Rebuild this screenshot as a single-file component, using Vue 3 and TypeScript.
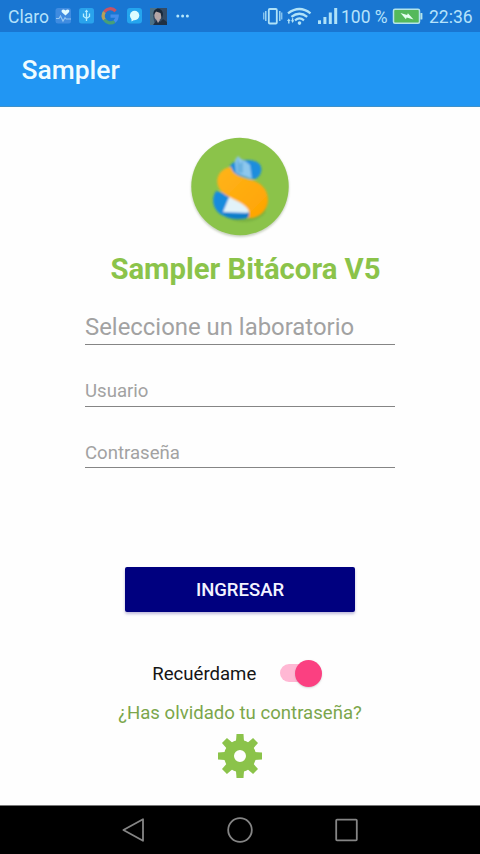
<script setup lang="ts">
import { ref } from 'vue'

const laboratory = ref('')
const user = ref('')
const password = ref('')
const remember = ref(true)
const toothAngles: number[] = [0, 45, 90, 135, 180, 225, 270, 315]
</script>

<template>
  <div class="screen">
    <header class="status-bar">
      <span class="carrier">Claro</span>
      <svg class="notifications" width="136" height="32" viewBox="54 0 136 32">
        <rect x="55.5" y="8" width="15.5" height="15.5" rx="2.5" fill="#3f8be0" />
        <path d="M65.5 15.5l-3.6-3.3c-1.4-2.2 1.6-4 3.6-1.6 2.2-2.4 5-.4 3.4 1.6z" fill="#e0fbff" />
        <path d="M56 18.5h3l1.5-2.5 2.5 5 2-3.4 1.2 1.4H71" fill="none" stroke="#94c6f0" stroke-width="1.1" />
        <rect x="79" y="8" width="15" height="15.5" rx="2.5" fill="#29a3ec" />
        <path d="M86.5 21V10.5M83.5 13.5v3l3 2 3-2v-3" fill="none" stroke="#b5edff" stroke-width="1.3" />
        <path d="M84.8 12l1.7-2.5 1.7 2.5z" fill="#b5edff" />
        <g fill="none" stroke-width="3.2">
          <path d="M115.6 11.1A7 7 0 0 0 104.4 12" stroke="#c65465" />
          <path d="M104.4 12A7 7 0 0 0 104.4 19.7" stroke="#b5a05a" />
          <path d="M104.4 19.7A7 7 0 0 0 114.6 21.4" stroke="#479f78" />
          <path d="M114.6 21.4A7 7 0 0 0 117.2 16.2H110.5" stroke="#448eea" />
        </g>
        <rect x="127" y="8" width="15" height="15.5" rx="3" fill="#24a5ee" />
        <circle cx="134.6" cy="15.5" r="4.7" fill="#dbfbff" />
        <path d="M131.5 18v3.4l3.5-2z" fill="#dbfbff" />
        <rect x="150" y="8" width="17" height="17" fill="#334b65" />
        <path d="M150 8h7l-4 8 2 9h-5z" fill="#4b7187" />
        <ellipse cx="158" cy="15.5" rx="3.6" ry="5" fill="#b4a6a6" />
        <path d="M153.5 15c-1-8 9-8 9.5-1l-1 5-1.5-6-4.5-1.5z" fill="#17283a" />
        <path d="M153 25l4-5 3 2 3-3 4 3v3z" fill="#1f3044" />
        <path d="M156.5 20l1.5 3 2-3z" fill="#aaa1a7" />
        <g fill="#b4e6fb">
          <circle cx="177.8" cy="16" r="1.5" />
          <circle cx="182.6" cy="16" r="1.5" />
          <circle cx="187.4" cy="16" r="1.5" />
        </g>
      </svg>
      <svg class="signals" width="78" height="32" viewBox="262 0 78 32">
        <g fill="none" stroke="#afe2f8">
          <rect x="268.8" y="9" width="8" height="14.5" rx="1" stroke-width="1.8" />
          <path d="M265.8 11v10M279.8 11v10" stroke-width="1.3" />
          <path d="M263.8 12.5v7M281.8 12.5v7" stroke-width="1" />
          <path d="M288 13.3Q299.5 4.6 310.5 13.3" stroke-width="2.3" />
          <path d="M291.4 16.9Q299.5 10.6 307.2 16.9" stroke-width="2.3" />
          <path d="M295 20.3Q299.5 16.6 304 20.3" stroke-width="2.2" />
        </g>
        <g fill="#afe2f8">
          <circle cx="299.5" cy="23.1" r="1.8" />
          <path d="M287 21l1.8-2.5 1.8 2.5zM291 20.3h3.2l-1.6 2.7z" />
          <rect x="288.1" y="20.5" width="1.4" height="3" />
          <rect x="291.9" y="18.2" width="1.4" height="3" />
          <rect x="318" y="20.3" width="3" height="3.7" />
          <rect x="323.4" y="17" width="3" height="7" />
          <rect x="328.8" y="12.5" width="3" height="11.5" />
          <rect x="334.2" y="8" width="3" height="16" />
        </g>
      </svg>
      <span class="percent">100 %</span>
      <svg class="battery" width="32" height="32" viewBox="391 0 32 32">
        <rect x="393.5" y="9.3" width="26" height="14" rx="1.5" fill="#54b95b" stroke="#b4e4ea" stroke-width="1.5" />
        <rect x="420.4" y="13" width="2" height="6.5" rx=".6" fill="#b4e4ea" />
        <path d="M400.5 13l6.6 2 .8-1.8 5.6 6.3-6.8-2-.8 1.8z" fill="#e4fff0" />
      </svg>
      <span class="clock">22:36</span>
    </header>

    <div class="app-bar"><h1 class="app-title">Sampler</h1></div>

    <main class="content">
      <svg class="logo" width="104" height="104" viewBox="0 0 104 104">
        <defs>
          <linearGradient id="ribbon" x1="0" y1="0" x2="1" y2="1">
            <stop offset="0" stop-color="#ffb41c" />
            <stop offset="1" stop-color="#ffa300" />
          </linearGradient>
          <filter id="soften" x="-20%" y="-20%" width="140%" height="140%"><feGaussianBlur stdDeviation=".8" /></filter>
          <filter id="shade" x="-20%" y="-20%" width="140%" height="140%"><feGaussianBlur stdDeviation="1.3" /></filter>
        </defs>
        <circle cx="52" cy="53" r="49" fill="#adb9a0" opacity=".65" filter="url(#shade)" />
        <circle cx="52" cy="51.5" r="48.7" fill="#8bc34a" />
        <path d="M34 75c10 10 25 12 36 3l8-15-1 15c-9 11-30 12-40 2z" fill="#679c38" opacity=".45" filter="url(#shade)" />
        <g filter="url(#soften)">
          <path d="M40 36c2-9 10-12 17-11 12-1 18 5 16 12-2 7-8 9-14 6l-17-5z" fill="#1c8ddd" />
          <path d="M47 25l3-4 3 3 4 2 5 4 2 14-16-6z" fill="#8ec8ed" />
          <path d="M49 22l3 7 3-3v12h-6z" fill="#2789c9" opacity=".35" />
          <path d="M28 56c-6 9-2 21 8 25 10 5 24 4 28-2L42 60z" fill="#168bdd" />
          <path d="M42 60l22 14-2 4-27-1z" fill="#e2f2f8" />
          <path d="M35 77c7 3 18 3 27 0l1 4c-8 5-20 3-26-1z" fill="#097dc8" />
          <path d="M43 32c-10 1-16 10-13 19 3 8 11 11 19 15 8 4 15 9 11 17 11 1 20-8 20-18 0-11-8-18-17-20-9-2-18-5-20-13z" fill="url(#ribbon)" />
        </g>
      </svg>
      <h2 class="heading">Sampler Bitácora V5</h2>
      <form class="form" @submit.prevent>
        <input v-model="laboratory" class="field field-large" type="text" placeholder="Seleccione un laboratorio" />
        <input v-model="user" class="field" type="text" placeholder="Usuario" />
        <input v-model="password" class="field" type="password" placeholder="Contraseña" />
        <button class="submit" type="submit"><span>INGRESAR</span></button>
      </form>
      <div class="remember">
        <span class="remember-label">Recuérdame</span>
        <button class="switch" :class="{ on: remember }" type="button" role="switch" :aria-checked="remember" @click="remember = !remember">
          <span class="thumb"></span>
        </button>
      </div>
      <a class="forgot">¿Has olvidado tu contraseña?</a>
      <svg class="gear" width="46" height="46" viewBox="-23 -23 46 46">
        <g fill="#8bc34a">
          <path v-for="angle in toothAngles" :key="angle" d="M-4.2-12L-3.5-22H3.5L4.2-12z" :transform="`rotate(${angle})`" />
        </g>
        <circle r="11" fill="none" stroke="#8bc34a" stroke-width="10" />
      </svg>
    </main>

    <nav class="nav-bar">
      <svg width="24" height="26" viewBox="0 0 24 26"><path d="M2.4 13L22 2.2v21.6z" /></svg>
      <svg width="26" height="26" viewBox="0 0 26 26"><circle cx="13" cy="13" r="11.8" /></svg>
      <svg width="24" height="26" viewBox="0 0 24 26"><rect x="1.2" y="2.7" width="20.6" height="20.6" rx=".8" /></svg>
    </nav>
  </div>
</template>

<style>
body {
  background: #fff;
}
</style>

<style scoped>
.screen {
  display: flex;
  flex-direction: column;
  width: 480px;
  height: 854px;
  overflow: hidden;
  background: #fefefe;
  font-family: Roboto, "Liberation Sans", sans-serif;
}
.status-bar {
  display: flex;
  align-items: center;
  flex: none;
  height: 32px;
  padding: 0 8px;
  background: #1976d2;
  color: #b5e2fb;
  font-size: 17.5px;
  line-height: 32px;
  white-space: nowrap;
}
.status-bar svg {
  flex: none;
}
.carrier {
  width: 46px;
}
.carrier,
.percent,
.clock {
  padding-top: 1px;
}
.signals {
  margin-left: auto;
}
.percent {
  width: 49px;
  padding-left: 1px;
  box-sizing: border-box;
}
.battery {
  margin: 0 6px 0 2px;
}
.clock {
  width: 43px;
}
.app-bar {
  display: flex;
  align-items: center;
  flex: none;
  box-sizing: border-box;
  height: 75px;
  padding: 2px 21.5px 0;
  border-bottom: 1px solid #3f91c9;
  background: #2196f3;
}
.app-title {
  margin: 0;
  color: #effcff;
  font-size: 26.4px;
  font-weight: 500;
  line-height: 32px;
}
.content {
  display: flex;
  flex-direction: column;
  align-items: center;
  flex: 1;
  min-height: 0;
  padding-top: 28px;
}
.logo {
  flex: none;
}
.heading {
  margin: 12px 0 0 11px;
  color: #8bc34a;
  font-size: 29.3px;
  font-weight: 700;
  line-height: 36px;
  white-space: nowrap;
}
.form {
  display: flex;
  flex-direction: column;
  align-items: center;
  width: 310px;
  padding-top: 20px;
}
.field {
  box-sizing: border-box;
  width: 310px;
  height: 61.5px;
  padding: 32px 0 0;
  border: 0;
  border-bottom: 1.5px solid #858585;
  outline: 0;
  background: transparent;
  color: #555;
  font: 18.6px/28px Roboto, sans-serif;
}
.field-large {
  height: 38px;
  padding: 2px 0 0;
  font-size: 23.9px;
}
.field::placeholder {
  color: #a2a2a2;
  opacity: 1;
}
.submit {
  width: 230px;
  height: 45px;
  margin-top: 99px;
  padding: 2px 0 0;
  border: 0;
  border-radius: 2px;
  background: #00007f;
  box-shadow: 0 2px 3px #7770b577;
  color: #f4f3ff;
  font: 500 18.5px/43px Roboto, sans-serif;
}
.remember {
  display: flex;
  align-items: center;
  gap: 23.5px;
  height: 28px;
  margin: 47px 0 0 -10px;
}
.remember-label {
  padding-top: 2px;
  color: #151515;
  font-size: 18.6px;
  line-height: 28px;
}
.switch {
  display: flex;
  align-items: center;
  width: 38px;
  height: 18px;
  padding: 0;
  border: 0;
  border-radius: 9px;
  background: #ccc;
}
.thumb {
  flex: none;
  width: 27px;
  height: 27px;
  border-radius: 50%;
  background: #eee;
  box-shadow: 0 1px 2px #9996;
}
.switch.on {
  background: #ffb8d4;
}
.switch.on .thumb {
  margin-left: 15px;
  background: #fb4081;
}
.forgot {
  margin-top: 12px;
  color: #7ba64b;
  font-size: 18.6px;
  line-height: 28px;
  white-space: nowrap;
}
.gear {
  flex: none;
  margin-top: 6px;
}
.nav-bar {
  display: flex;
  align-items: center;
  justify-content: space-between;
  flex: none;
  box-sizing: border-box;
  height: 49px;
  padding: 0 121px;
  border-top: 1px solid #777;
  background: #000;
}
.nav-bar svg {
  fill: none;
  stroke: #858585;
  stroke-width: 1.8;
  stroke-linejoin: round;
}
</style>
